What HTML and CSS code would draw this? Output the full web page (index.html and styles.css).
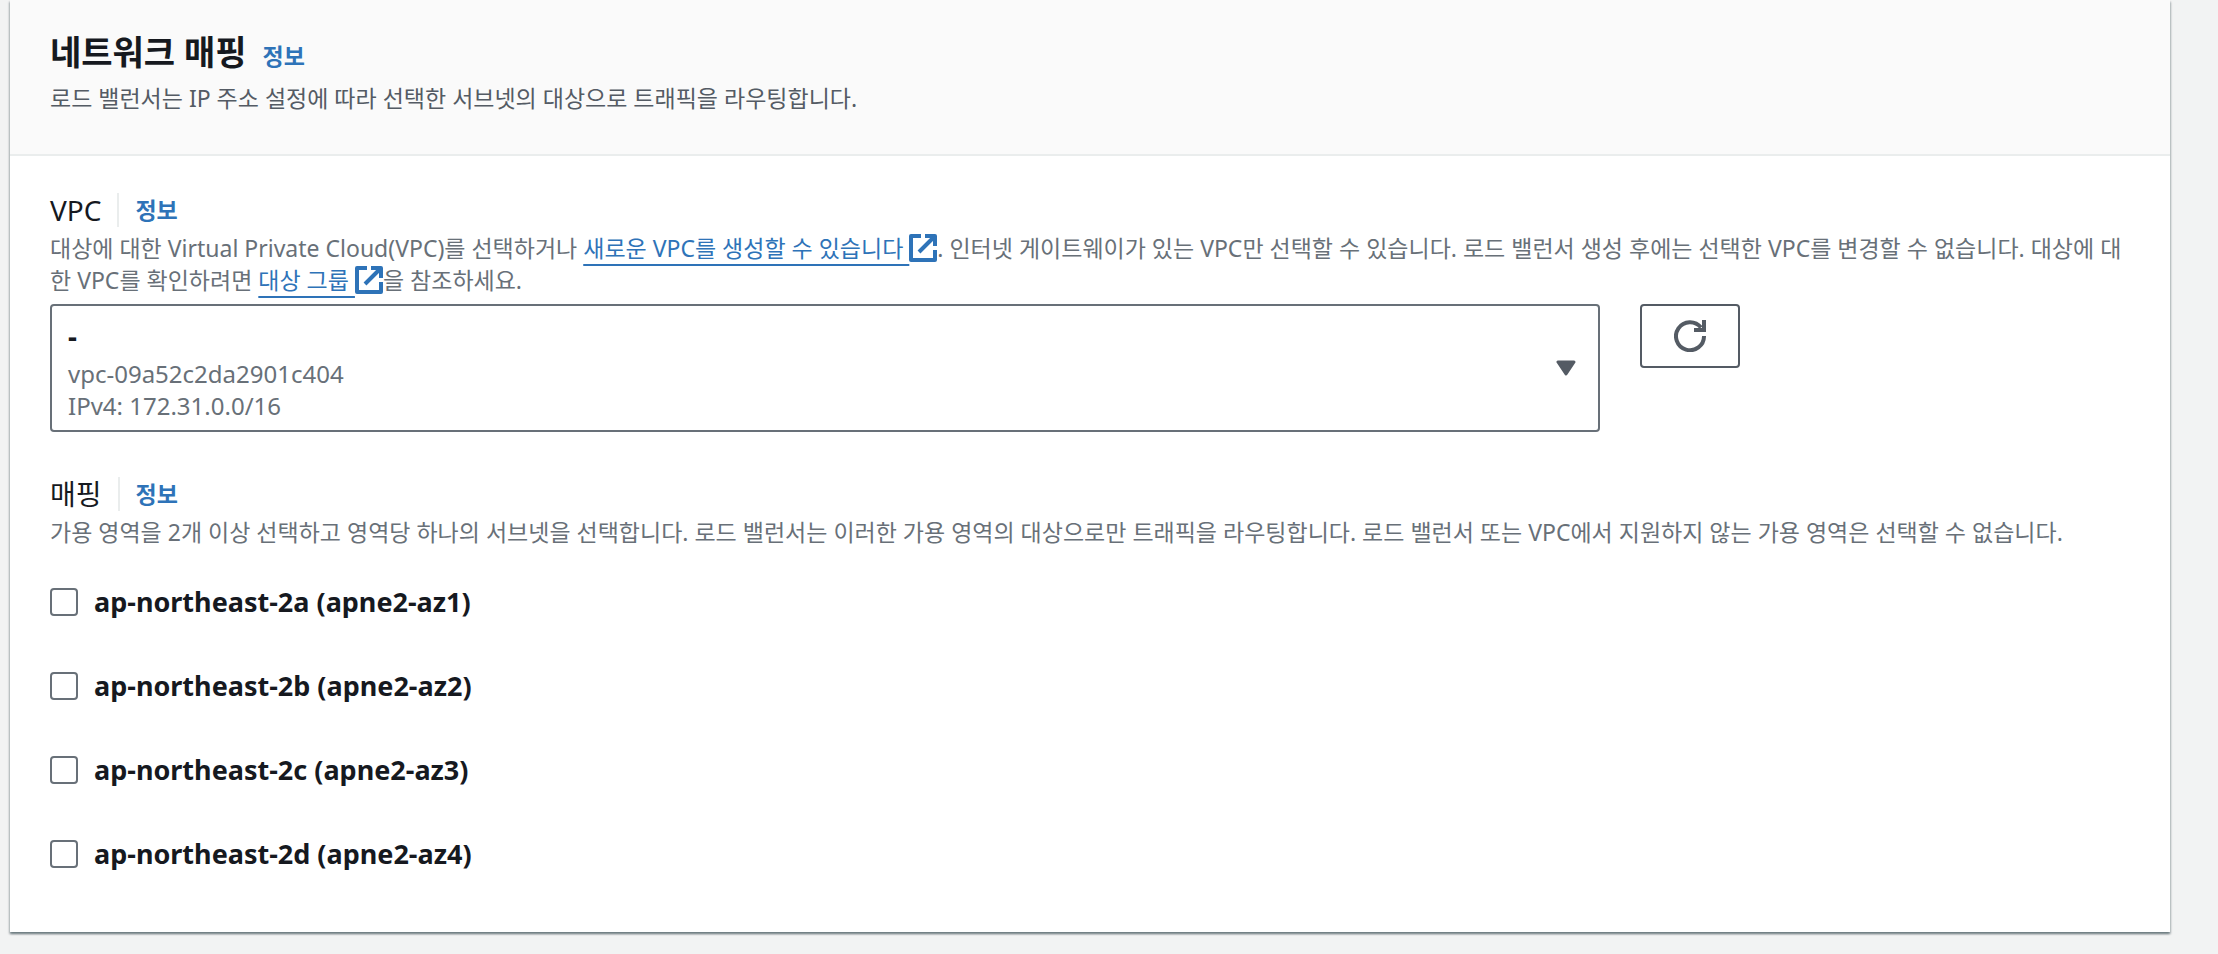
FILE: index.html
```html
<!DOCTYPE html>
<html lang="ko">
<head>
    <meta charset="UTF-8">
    <meta name="viewport" content="width=device-width, initial-scale=1.0">
    <title>네트워크 매핑</title>
    <link rel="stylesheet" href="styles.css">
</head>
<body>
    <section class="container">
        <header class="container-header">
            <div class="title-row">
                <h2>네트워크 매핑</h2>
                <a class="info-link" href="#">정보</a>
            </div>
            <p class="header-description">로드 밸런서는 IP 주소 설정에 따라 선택한 서브넷의 대상으로 트래픽을 라우팅합니다.</p>
        </header>

        <form class="container-body">
            <!-- VPC -->
            <div class="form-field">
                <div class="label-row">
                    <label for="vpc">VPC</label>
                    <a class="info-link divided" href="#">정보</a>
                </div>
                <p class="description">대상에 대한 Virtual Private Cloud(VPC)를 선택하거나 <a class="external-link" href="#">새로운 VPC를 생성할 수 있습니다&nbsp;<svg class="icon-external" viewBox="0 0 14 14" aria-hidden="true"><path d="M6 1H1v12h12V8M8 1h5v5M13 1L5 9"/></svg></a>. 인터넷 게이트웨이가 있는 VPC만 선택할 수 있습니다. 로드 밸런서 생성 후에는 선택한 VPC를 변경할 수 없습니다. 대상에 대한 VPC를 확인하려면 <a class="external-link" href="#">대상 그룹&nbsp;<svg class="icon-external" viewBox="0 0 14 14" aria-hidden="true"><path d="M6 1H1v12h12V8M8 1h5v5M13 1L5 9"/></svg></a>을 참조하세요.</p>
                <div class="control-grid">
                    <div class="select-box">
                        <select id="vpc" name="vpc">
                            <option value="vpc-09a52c2da2901c404">-</option>
                        </select>
                        <div class="select-details">
                            <span>vpc-09a52c2da2901c404</span>
                            <span>IPv4: 172.31.0.0/16</span>
                        </div>
                        <svg class="icon-caret" viewBox="0 0 20 16" aria-hidden="true"><path d="M2 2h16l-8 12z"/></svg>
                    </div>
                    <button type="button" class="refresh-button" aria-label="새로 고침">
                        <svg class="icon-refresh" viewBox="0 0 32 32" aria-hidden="true"><path d="M30 16A14 14 0 1 1 27 7.500M30 0v10H20"/></svg>
                    </button>
                </div>
            </div>

            <!-- 가용 영역 매핑 -->
            <div class="form-field">
                <div class="label-row">
                    <span>매핑</span>
                    <a class="info-link divided" href="#">정보</a>
                </div>
                <p class="description">가용 영역을 2개 이상 선택하고 영역당 하나의 서브넷을 선택합니다. 로드 밸런서는 이러한 가용 영역의 대상으로만 트래픽을 라우팅합니다. 로드 밸런서 또는 VPC에서 지원하지 않는 가용 영역은 선택할 수 없습니다.</p>
                <div class="zone-list">
                    <label class="zone"><input type="checkbox" name="az" value="apne2-az1">ap-northeast-2a (apne2-az1)</label>
                    <label class="zone"><input type="checkbox" name="az" value="apne2-az2">ap-northeast-2b (apne2-az2)</label>
                    <label class="zone"><input type="checkbox" name="az" value="apne2-az3">ap-northeast-2c (apne2-az3)</label>
                    <label class="zone"><input type="checkbox" name="az" value="apne2-az4">ap-northeast-2d (apne2-az4)</label>
                </div>
            </div>
        </form>
    </section>
</body>
</html>
```
FILE: styles.css
```css
* {
    box-sizing: border-box;
}
body {
    min-height: 100vh;
    margin: 0;
    padding: 0 48px 20px 10px;
    background-color: #f2f3f3;
    color: #16191f;
    font-family: "Noto Sans", "Noto Sans CJK KR", sans-serif;
    font-size: 23px;
    line-height: 32px;
}
h2,
p {
    margin: 0;
}
a {
    color: #2e73b8;
}
.container {
    background-color: #fff;
    box-shadow: 0 2px 2px 0 rgba(0, 28, 36, 0.3), 1px 2px 2px 0 rgba(0, 28, 36, 0.2), -1px 2px 2px 0 rgba(0, 28, 36, 0.2);
}
.container-header {
    padding: 30px 40px 40px;
    background-color: #fafafa;
    border-bottom: 2px solid #eaeded;
}
.title-row {
    display: flex;
    align-items: baseline;
    gap: 16px;
    margin-bottom: 4px;
    line-height: 44px;
}
h2 {
    font-size: 34px;
    font-weight: 700;
}
.header-description {
    color: #545b64;
}
.info-link {
    font-size: 23px;
    font-weight: 700;
    text-decoration: none;
}
.container-body {
    display: flex;
    flex-direction: column;
    gap: 40px;
    padding: 32px 40px 56px;
}
.label-row {
    display: flex;
    align-items: center;
    font-size: 28px;
    line-height: 44px;
}
.info-link.divided {
    margin-left: 16px;
    padding-left: 16px;
    border-left: 2px solid #eaeded;
    line-height: 34px;
}
.description {
    color: #687078;
}
.external-link {
    text-decoration: underline;
    text-decoration-thickness: 2px;
    text-underline-offset: 7px;
    text-decoration-skip-ink: none;
}
.icon-external {
    width: 28px;
    height: 28px;
    vertical-align: -5px;
    fill: none;
    stroke: currentColor;
    stroke-width: 2;
    stroke-linejoin: round;
}
.control-grid {
    display: grid;
    grid-template-columns: repeat(12, 1fr);
    align-items: start;
    gap: 40px;
    margin-top: 8px;
}
/* the details and the caret share one grid cell with the select */
.select-box {
    display: grid;
    grid-column: span 9;
}
.select-box > * {
    grid-area: 1 / 1;
}
.select-box select {
    width: 100%;
    height: 128px;
    padding: 12px 16px 76px;
    appearance: none;
    background-color: #fff;
    border: 2px solid #687078;
    border-radius: 4px;
    color: #16191f;
    font: inherit;
    font-size: 28px;
    font-weight: 700;
}
.select-details {
    display: flex;
    flex-direction: column;
    align-self: end;
    padding: 0 18px 10px;
    color: #687078;
    font-size: 24px;
    pointer-events: none;
}
.icon-caret {
    width: 20px;
    height: 16px;
    margin-right: 24px;
    align-self: center;
    justify-self: end;
    fill: #545b64;
    stroke: #545b64;
    stroke-width: 3;
    stroke-linejoin: round;
    pointer-events: none;
}
.refresh-button {
    display: flex;
    align-items: center;
    justify-content: center;
    width: 100px;
    height: 64px;
    padding: 0;
    background-color: #fff;
    border: 2px solid #545b64;
    border-radius: 4px;
    cursor: pointer;
}
.icon-refresh {
    width: 32px;
    height: 32px;
    fill: none;
    stroke: #545b64;
    stroke-width: 4;
}
.zone-list {
    display: flex;
    flex-direction: column;
    gap: 40px;
    margin-top: 32px;
}
.zone {
    display: flex;
    align-items: center;
    gap: 16px;
    font-size: 27px;
    font-weight: 700;
    line-height: 44px;
}
.zone input {
    width: 28px;
    height: 28px;
    margin: 0;
    appearance: none;
    background-color: #fff;
    border: 2px solid #687078;
    border-radius: 4px;
}
.zone input:checked {
    background-color: #2e73b8;
    border-color: #2e73b8;
}
```
